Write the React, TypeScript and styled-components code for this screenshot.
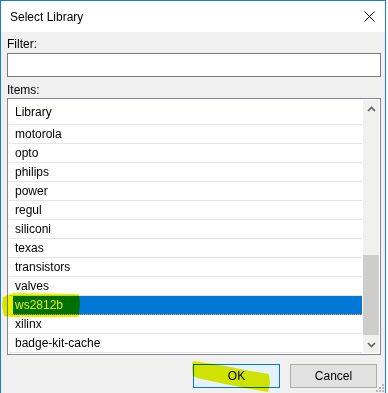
import styled, { createGlobalStyle } from 'styled-components'

const GlobalStyle = createGlobalStyle`
  html, body {
    margin: 0;
    padding: 0;
    background: #ffffff;
  }
  * {
    box-sizing: border-box;
  }
`

const Window = styled.div`
  position: relative;
  width: 386px;
  height: 393px;
  border: 1px solid #1a7ad4;
  border-bottom: none;
  display: flex;
  flex-direction: column;
  font-family: 'Liberation Sans', Arial, sans-serif;
  font-size: 12px;
  color: #000;
  overflow: hidden;
`

const TitleBar = styled.div`
  height: 31px;
  flex: none;
  background: #fff;
  display: flex;
  align-items: center;
  justify-content: space-between;
  padding: 0 8px 0 9px;
`

const Title = styled.span`
  font-size: 12px;
  line-height: 16px;
`

const CloseBtn = styled.div`
  width: 16px;
  height: 16px;
  display: flex;
  align-items: center;
  justify-content: center;
`

const Client = styled.div`
  position: relative;
  flex: 1;
  background: #f0f0f0;
  padding: 4px 4px 0 6px;
  display: flex;
  flex-direction: column;
`

const Label = styled.div<{ $gap?: number }>`
  line-height: 16px;
  height: 16px;
  margin-top: ${(p) => p.$gap ?? 0}px;
`

const FilterInput = styled.div`
  margin-top: 1px;
  height: 24px;
  background: #fff;
  border: 1px solid #7a7a7a;
`

const ListBox = styled.div`
  height: 257px;
  background: #fff;
  border: 1px solid #828790;
  display: flex;
`

const Rows = styled.div`
  flex: 1;
  display: flex;
  flex-direction: column;
`

const Row = styled.div<{ $header?: boolean }>`
  height: ${(p) => (p.$header ? 26 : 19)}px;
  margin-left: 1px;
  border-bottom: 1px solid #e5e5e5;
  display: flex;
  padding-left: 4px;
  flex: none;
`

const Cell = styled.div<{ $selected?: boolean }>`
  flex: 1;
  display: flex;
  align-items: center;
  padding-left: 2px;
  background: ${(p) => (p.$selected ? '#0078d7' : 'transparent')};
  color: ${(p) => (p.$selected ? '#fff' : '#000')};
  border-bottom: ${(p) => (p.$selected ? '1px dotted #f0a050' : 'none')};
  margin-bottom: ${(p) => (p.$selected ? '-1px' : '0')};
`

const ScrollBar = styled.div`
  width: 16px;
  margin: 1px 1px 1px 1px;
  background: #f0f0f0;
  display: flex;
  flex-direction: column;
`

const ArrowBtn = styled.div`
  height: 17px;
  flex: none;
  display: flex;
  align-items: center;
  justify-content: center;
`

const Track = styled.div`
  flex: 1;
  display: flex;
  flex-direction: column;
  justify-content: flex-end;
`

const Thumb = styled.div`
  height: 80px;
  margin-bottom: 1px;
  background: #cdcdcd;
`

const ButtonRow = styled.div`
  margin-top: 9px;
  display: flex;
  justify-content: flex-end;
  gap: 10px;
  padding-right: 4px;
`

const Button = styled.div<{ $default?: boolean }>`
  width: 87px;
  height: 24px;
  display: flex;
  align-items: center;
  justify-content: center;
  background: ${(p) => (p.$default ? '#e5f1fb' : '#e1e1e1')};
  border: 1px solid ${(p) => (p.$default ? '#0078d7' : '#adadad')};
`

const Grip = styled.svg`
  position: absolute;
  right: 0;
  bottom: 0;
`

const Highlighter = styled.svg`
  position: absolute;
  left: -1px;
  top: -1px;
  pointer-events: none;
  mix-blend-mode: multiply;
`

const libraries = [
  'motorola',
  'opto',
  'philips',
  'power',
  'regul',
  'siliconi',
  'texas',
  'transistors',
  'valves',
  'ws2812b',
  'xilinx',
  'badge-kit-cache',
]

export default function App() {
  return (
    <>
      <GlobalStyle />
      <Window>
        <TitleBar>
          <Title>Select Library</Title>
          <CloseBtn>
            <svg width="11" height="11" viewBox="0 0 11 11">
              <path d="M0.5 0.5 L10.5 10.5 M10.5 0.5 L0.5 10.5" stroke="#000" strokeWidth="1" />
            </svg>
          </CloseBtn>
        </TitleBar>
        <Client>
          <Label>Filter:</Label>
          <FilterInput />
          <Label $gap={5}>Items:</Label>
          <ListBox>
            <Rows>
              <Row $header>
                <Cell>Library</Cell>
              </Row>
              {libraries.map((name) => (
                <Row key={name}>
                  <Cell $selected={name === 'ws2812b'}>{name}</Cell>
                </Row>
              ))}
            </Rows>
            <ScrollBar>
              <ArrowBtn>
                <svg width="9" height="6" viewBox="0 0 9 6">
                  <path d="M1 5 L4.5 1.5 L8 5" stroke="#606060" strokeWidth="1.6" fill="none" />
                </svg>
              </ArrowBtn>
              <Track>
                <Thumb />
              </Track>
              <ArrowBtn>
                <svg width="9" height="6" viewBox="0 0 9 6">
                  <path d="M1 1 L4.5 4.5 L8 1" stroke="#606060" strokeWidth="1.6" fill="none" />
                </svg>
              </ArrowBtn>
            </ScrollBar>
          </ListBox>
          <ButtonRow>
            <Button $default>OK</Button>
            <Button>Cancel</Button>
          </ButtonRow>
          <Grip width="10" height="10" viewBox="0 0 10 10">
            <rect x="7" y="1" width="2" height="2" fill="#b8b8b8" />
            <rect x="4" y="4" width="2" height="2" fill="#b8b8b8" />
            <rect x="7" y="4" width="2" height="2" fill="#b8b8b8" />
            <rect x="1" y="7" width="2" height="2" fill="#b8b8b8" />
            <rect x="4" y="7" width="2" height="2" fill="#b8b8b8" />
            <rect x="7" y="7" width="2" height="2" fill="#b8b8b8" />
          </Grip>
        </Client>
        {/* yellow marker strokes drawn over the dialog */}
        <Highlighter width="388" height="393" viewBox="0 0 388 393">
          <path
            d="M3 297 L8 295 L14 293 L79 294 L80 305 L79 314 L78 317 L45 317 L12 317 L4 316 L2 306 Z"
            fill="#e8f000"
          />
          <path
            d="M193 361 L200 362 L225 366 L250 371 L269 374 L270 383 L268 392 L245 388 L220 383 L197 378 L193 376 L192 368 Z"
            fill="#e8f000"
          />
        </Highlighter>
      </Window>
    </>
  )
}
